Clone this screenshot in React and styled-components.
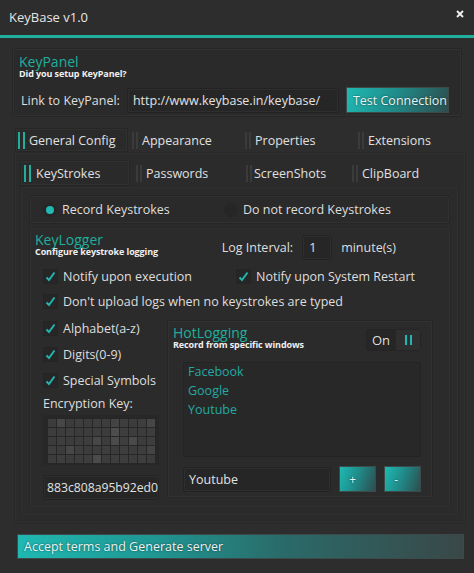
import React from "react"
import styled, { createGlobalStyle } from "styled-components"

const TEAL = "#1faf9c"

const Global = createGlobalStyle`
  html, body {
    margin: 0;
    padding: 0;
    background: #2d2d2d;
  }
  body {
    font-family: "Open Sans", "Noto Sans", sans-serif;
    font-size: 12px;
    color: #dedede;
  }
  * { box-sizing: border-box; }
`

const Window = styled.div`
  width: 474px;
  height: 573px;
  background: #2d2d2d;
  overflow: hidden;
`

const TitleBar = styled.div`
  height: 38px;
  display: flex;
  justify-content: space-between;
  padding: 0 10px 0 9px;
  border-bottom: 3px solid ${TEAL};
`

const Title = styled.div`
  font-size: 13px;
  line-height: 38px;
  margin-top: -2px;
  color: #e6e6e6;
`

const Close = styled.svg`
  margin-top: 10px;
  width: 8px;
  height: 8px;
`

const Content = styled.div`
  padding: 10px 0 0 12px;
`

const Group = styled.div`
  background: #2a2a2a;
  border: 1px solid #262626;
  box-shadow: inset 0 0 0 1px #313131;
  border-radius: 2px;
  width: ${p => p.w}px;
  padding: ${p => p.pad || "4px 6px"};
`

const GroupTitle = styled.div`
  color: ${TEAL};
  font-size: 14px;
  line-height: 15px;
`

const GroupSub = styled.div`
  font-size: 9px;
  font-weight: 700;
  line-height: 10px;
  color: #f0f0f0;
  letter-spacing: -0.1px;
`

const LinkRow = styled.div`
  display: flex;
  align-items: center;
  margin-top: 8px;
  padding-left: 2px;
  gap: 7px;
`

const LinkLabel = styled.span`
  font-size: 12.5px;
`

const Field = styled.div`
  background: #262626;
  border: 1px solid #232323;
  box-shadow: inset 0 0 0 1px #2e2e2e;
  border-radius: 2px;
  height: 25px;
  width: ${p => p.w}px;
  margin-top: ${p => p.mt || 0}px;
  display: flex;
  align-items: center;
  padding-left: ${p => p.pl ?? 5}px;
  font-size: ${p => p.fs || 12.5}px;
  color: #e2e2e2;
  white-space: nowrap;
  overflow: hidden;
`

const GradButton = styled.div`
  height: ${p => p.h || 26}px;
  width: ${p => p.w}px;
  background: ${p => p.wide
    ? "linear-gradient(90deg, #1fb8b2 0%, #1f9793 30%, #2a6a69 60%, #3a4747 100%)"
    : "linear-gradient(110deg, #1fb9b3 0%, #1f8e8c 45%, #2e4d4e 100%)"};
  border: 1px solid #3c4a4a;
  display: flex;
  align-items: center;
  padding-left: ${p => p.pl ?? 6}px;
  font-size: ${p => p.fs || 12.5}px;
  color: #eaf4f4;
  text-shadow: 0 0 2px rgba(0, 0, 0, 0.6);
`

const TabBar = styled.div`
  display: flex;
  margin-left: ${p => p.ml}px;
  margin-top: ${p => p.mt || 0}px;
  height: ${p => p.h}px;
`

const TabSlot = styled.div`
  width: ${p => p.w}px;
  flex-shrink: 0;
  height: 100%;
  display: flex;
  align-items: center;
  padding-left: ${p => p.bx}px;
  background: ${p => p.active ? "#2a2a2a" : "transparent"};
  border: 1px solid ${p => p.active ? "#262626" : "transparent"};
  box-shadow: ${p => p.active ? "inset 0 0 0 1px #303030" : "none"};
  font-size: 12.5px;
  color: #e0e0e0;
`

const Bars = styled.span`
  display: inline-flex;
  gap: ${p => p.active ? 3 : 2}px;
  margin-right: ${p => p.gap}px;
  & > i {
    display: block;
    width: 2px;
    height: 17px;
    background: ${p => p.active ? TEAL : "#3b3b3b"};
  }
`

const Panel = styled.div`
  background: #2b2b2b;
  border: 1px solid #272727;
  box-shadow: inset 0 0 0 1px #303030;
  width: ${p => p.w}px;
  height: ${p => p.h}px;
  margin-left: ${p => p.ml || 0}px;
  margin-top: ${p => p.mt || 0}px;
  padding: ${p => p.pad};
`

const RadioRow = styled.div`
  display: flex;
  align-items: center;
  height: 29px;
  width: 421px;
  background: #2a2a2a;
  border: 1px solid #262626;
  box-shadow: inset 0 0 0 1px #313131;
  border-radius: 3px;
  padding-left: 13px;
  font-size: 12.5px;
`

const Radio = styled.span`
  width: 14px;
  height: 14px;
  border-radius: 50%;
  background: #262626;
  display: inline-flex;
  align-items: center;
  justify-content: center;
  margin-right: 5px;
  &::after {
    content: "";
    width: 8px;
    height: 8px;
    border-radius: 50%;
    background: ${p => p.on ? "#22b8b4" : "transparent"};
  }
`

const RadioOption = styled.div`
  display: flex;
  align-items: center;
  width: ${p => p.w || "auto"}px;
`

const LoggerHead = styled.div`
  display: flex;
  justify-content: space-between;
  align-items: flex-start;
`

const Interval = styled.div`
  display: flex;
  align-items: center;
  gap: 9px;
  margin-top: 3px;
  margin-right: 54px;
  font-size: 12.5px;
`

const CheckRow = styled.div`
  display: flex;
  margin-top: ${p => p.mt || 0}px;
  padding-left: 8px;
`

const Check = styled.label`
  display: flex;
  align-items: center;
  width: ${p => p.w || "auto"}px;
  height: 16px;
  margin-top: ${p => p.mt || 0}px;
  font-size: 12.5px;
  white-space: nowrap;
`

const Box = styled.span`
  width: 15px;
  height: 15px;
  background: #262626;
  border: 1px solid #242424;
  margin-right: 5px;
  display: inline-flex;
  align-items: center;
  justify-content: center;
`

const Lower = styled.div`
  display: flex;
  margin-top: 11px;
  padding-left: 8px;
`

const LeftCol = styled.div`
  width: 116px;
  display: flex;
  flex-direction: column;
`

const Label = styled.div`
  font-size: 12.5px;
  margin-top: 9px;
  line-height: 14px;
`

const KeyGrid = styled.div`
  width: 116px;
  height: 50px;
  margin-top: 4px;
  background: #272727;
  border-radius: 2px;
  padding: 4px 5px;
  display: grid;
  grid-template-columns: repeat(12, 8px);
  grid-auto-rows: 8px;
  gap: 1px;
`

const Cell = styled.span`
  background: ${p => p.c};
`

const Hot = styled.div`
  margin-left: 8px;
  width: 266px;
  height: 178px;
  background: #2b2b2b;
  border: 1px solid #262626;
  box-shadow: inset 0 0 0 1px #313131;
  padding: 4px 11px 0 5px;
`

const HotHead = styled.div`
  display: flex;
  justify-content: space-between;
  align-items: flex-start;
`

const Toggle = styled.div`
  display: flex;
  height: 22px;
  margin-top: 4px;
  background: #262626;
  border: 1px solid #252525;
  border-radius: 3px;
  font-size: 13px;
  align-items: center;
  & > span:first-child {
    padding: 0 6px 0 5px;
  }
  & > span:last-child {
    height: 100%;
    width: 24px;
    background: #2f2f2f;
    display: flex;
    align-items: center;
    justify-content: center;
    gap: 3px;
  }
  & i {
    display: block;
    width: 2px;
    height: 10px;
    background: #22b7b3;
  }
`

const List = styled.div`
  margin: 11px 0 0 10px;
  height: 95px;
  background: #282828;
  border: 1px solid #242424;
  padding: 1px 0 0 4px;
  display: flex;
  flex-direction: column;
  gap: 3px;
`

const ListItem = styled.div`
  color: #25a8a4;
  font-size: 12.5px;
  line-height: 16px;
`

const AddRow = styled.div`
  display: flex;
  align-items: center;
  margin: 9px 0 0 10px;
  gap: 8px;
`

const Footer = styled.div`
  margin: 10px 0 0 5px;
`

const keyColors = [
  "#3c3c3c","#474747","#3c3c3c","#3e3e3e","#3c3c3c","#3e3e3e","#3d3d3d","#444444","#3e3e3e","#3c3c3c","#3e3e3e","#464646",
  "#3d3d3d","#3c3c3c","#3e3e3e","#3c3c3c","#3d3d3d","#3e3e3e","#3c3c3c","#4d4d4d","#3e3e3e","#3d3d3d","#3c3c3c","#3e3e3e",
  "#3c3c3c","#3e3e3e","#3c3c3c","#3d3d3d","#3e3e3e","#474747","#3c3c3c","#4b4b4b","#3e3e3e","#4a4a4a","#3c3c3c","#3e3e3e",
  "#3e3e3e","#3c3c3c","#474747","#3e3e3e","#3c3c3c","#3d3d3d","#3e3e3e","#3c3c3c","#3e3e3e","#3c3c3c","#3d3d3d","#444444",
  "#3c3c3c","#3e3e3e","#3c3c3c","#3d3d3d","#3e3e3e","#4b4b4b","#3c3c3c","#3e3e3e","#3d3d3d","#3c3c3c","#3e3e3e","#3c3c3c",
]

const Tick = () => (
  <svg width="11" height="11" viewBox="0 0 11 11">
    <path d="M1.5 6.5 L4 9 L9.5 1.5" stroke="#22b5ad" strokeWidth="2" fill="none" />
  </svg>
)

const CheckItem = ({ children, w, mt }) => (
  <Check w={w} mt={mt}>
    <Box><Tick /></Box>
    {children}
  </Check>
)

const Tab = ({ label, active, w, bx, gap }) => (
  <TabSlot active={active} w={w} bx={bx}>
    <Bars active={active} gap={gap}><i /><i /></Bars>
    {label}
  </TabSlot>
)

export default function App() {
  return (
    <Window>
      <Global />
      <TitleBar>
        <Title>KeyBase v1.0</Title>
        <Close viewBox="0 0 8 8">
          <path d="M1 1 L7 7 M7 1 L1 7" stroke="#f2f2f2" strokeWidth="1.8" />
        </Close>
      </TitleBar>
      <Content>
        <Group w={450} pad="5px 6px 3px 6px">
          <GroupTitle>KeyPanel</GroupTitle>
          <GroupSub>Did you setup KeyPanel?</GroupSub>
          <LinkRow>
            <LinkLabel>Link to KeyPanel:</LinkLabel>
            <Field w={212}>http://www.keybase.in/keybase/</Field>
            <GradButton w={103}>Test Connection</GradButton>
          </LinkRow>
        </Group>

        <TabBar ml={3} mt={11} h={24}>
          <Tab label="General Config" active w={113} bx={2} gap={4} />
          <Tab label="Appearance" w={113} bx={3} gap={4} />
          <Tab label="Properties" w={113} bx={3} gap={4} />
          <Tab label="Extensions" w={100} bx={3} gap={4} />
        </TabBar>

        <Panel w={452} h={372} ml={2} pad="7px 0 0 5px">
          <TabBar ml={0} h={26}>
            <Tab label="KeyStrokes" active w={110} bx={3} gap={5} />
            <Tab label="Passwords" w={109} bx={5} gap={4} />
            <Tab label="ScreenShots" w={108} bx={6} gap={2} />
            <Tab label="ClipBoard" w={100} bx={4} gap={4} />
          </TabBar>
          <Panel w={439} h={330} pad="8px 0 0 8px">
            <RadioRow>
              <RadioOption w={181}><Radio on />Record Keystrokes</RadioOption>
              <RadioOption><Radio />Do not record Keystrokes</RadioOption>
            </RadioRow>
            <Panel w={422} h={281} mt={3} pad="4px 0 0 5px">
              <LoggerHead>
                <div>
                  <GroupTitle>KeyLogger</GroupTitle>
                  <GroupSub>Configure keystroke logging</GroupSub>
                </div>
                <Interval>
                  <span>Log Interval:</span>
                  <Field w={30} pl={6}>1</Field>
                  <span>minute(s)</span>
                </Interval>
              </LoggerHead>
              <CheckRow mt={8}>
                <CheckItem w={193}>Notify upon execution</CheckItem>
                <CheckItem>Notify upon System Restart</CheckItem>
              </CheckRow>
              <CheckRow mt={9}>
                <CheckItem>Don't upload logs when no keystrokes are typed</CheckItem>
              </CheckRow>
              <Lower>
                <LeftCol>
                  <CheckItem>Alphabet(a-z)</CheckItem>
                  <CheckItem mt={10}>Digits(0-9)</CheckItem>
                  <CheckItem mt={10}>Special Symbols</CheckItem>
                  <Label>Encryption Key:</Label>
                  <KeyGrid>
                    {keyColors.map((c, i) => <Cell key={i} c={c} />)}
                  </KeyGrid>
                  <Field w={116} pl={3} fs={12.2} mt={10}>883c808a95b92ed0</Field>
                </LeftCol>
                <Hot>
                  <HotHead>
                    <div>
                      <GroupTitle>HotLogging</GroupTitle>
                      <GroupSub>Record from specific windows</GroupSub>
                    </div>
                    <Toggle>
                      <span>On</span>
                      <span><i /><i /></span>
                    </Toggle>
                  </HotHead>
                  <List>
                    <ListItem>Facebook</ListItem>
                    <ListItem>Google</ListItem>
                    <ListItem>Youtube</ListItem>
                  </List>
                  <AddRow>
                    <Field w={149}>Youtube</Field>
                    <GradButton w={37} h={26} pl={9} fs={12}>+</GradButton>
                    <GradButton w={37} h={26} pl={9} fs={12}>-</GradButton>
                  </AddRow>
                </Hot>
              </Lower>
            </Panel>
          </Panel>
        </Panel>

        <Footer>
          <GradButton wide w={447} h={25} pl={6}>Accept terms and Generate server</GradButton>
        </Footer>
      </Content>
    </Window>
  )
}
